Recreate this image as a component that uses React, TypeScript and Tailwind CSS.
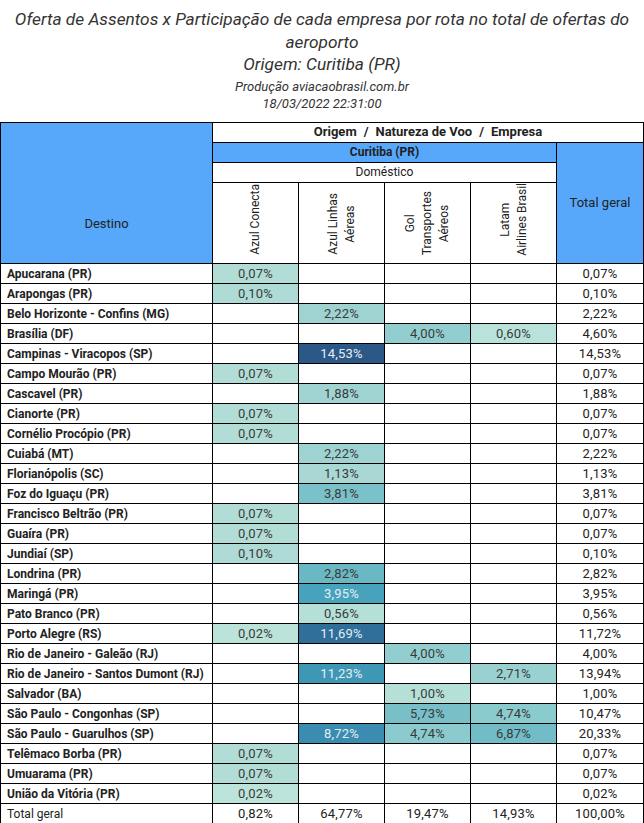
type Cell = { v: string; bg: string; light?: boolean } | null;

const FONT = "font-['Roboto','Liberation_Sans',sans-serif]";

const rows: { name: string; cells: Cell[]; total: string }[] = [
  { name: 'Apucarana (PR)', cells: [{ v: '0,07%', bg: 'bg-[#b2ddd6]' }, null, null, null], total: '0,07%' },
  { name: 'Arapongas (PR)', cells: [{ v: '0,10%', bg: 'bg-[#aedbd5]' }, null, null, null], total: '0,10%' },
  { name: 'Belo Horizonte - Confins (MG)', cells: [null, { v: '2,22%', bg: 'bg-[#9ed3d2]' }, null, null], total: '2,22%' },
  {
    name: 'Brasília (DF)',
    cells: [null, null, { v: '4,00%', bg: 'bg-[#92ced0]' }, { v: '0,60%', bg: 'bg-[#b9e3da]' }],
    total: '4,60%',
  },
  { name: 'Campinas - Viracopos (SP)', cells: [null, { v: '14,53%', bg: 'bg-[#2b5886]', light: true }, null, null], total: '14,53%' },
  { name: 'Campo Mourão (PR)', cells: [{ v: '0,07%', bg: 'bg-[#b2ddd6]' }, null, null, null], total: '0,07%' },
  { name: 'Cascavel (PR)', cells: [null, { v: '1,88%', bg: 'bg-[#a0d4d2]' }, null, null], total: '1,88%' },
  { name: 'Cianorte (PR)', cells: [{ v: '0,07%', bg: 'bg-[#b2ddd6]' }, null, null, null], total: '0,07%' },
  { name: 'Cornélio Procópio (PR)', cells: [{ v: '0,07%', bg: 'bg-[#b2ddd6]' }, null, null, null], total: '0,07%' },
  { name: 'Cuiabá (MT)', cells: [null, { v: '2,22%', bg: 'bg-[#9ed3d2]' }, null, null], total: '2,22%' },
  { name: 'Florianópolis (SC)', cells: [null, { v: '1,13%', bg: 'bg-[#a9d8d4]' }, null, null], total: '1,13%' },
  { name: 'Foz do Iguaçu (PR)', cells: [null, { v: '3,81%', bg: 'bg-[#7bc1c9]' }, null, null], total: '3,81%' },
  { name: 'Francisco Beltrão (PR)', cells: [{ v: '0,07%', bg: 'bg-[#b2ddd6]' }, null, null, null], total: '0,07%' },
  { name: 'Guaíra (PR)', cells: [{ v: '0,07%', bg: 'bg-[#b2ddd6]' }, null, null, null], total: '0,07%' },
  { name: 'Jundiaí (SP)', cells: [{ v: '0,10%', bg: 'bg-[#aedbd5]' }, null, null, null], total: '0,10%' },
  { name: 'Londrina (PR)', cells: [null, { v: '2,82%', bg: 'bg-[#6bb8c5]' }, null, null], total: '2,82%' },
  { name: 'Maringá (PR)', cells: [null, { v: '3,95%', bg: 'bg-[#47a3bc]', light: true }, null, null], total: '3,95%' },
  { name: 'Pato Branco (PR)', cells: [null, { v: '0,56%', bg: 'bg-[#b4e0d8]' }, null, null], total: '0,56%' },
  {
    name: 'Porto Alegre (RS)',
    cells: [{ v: '0,02%', bg: 'bg-[#bbe3da]' }, { v: '11,69%', bg: 'bg-[#2f6f9a]', light: true }, null, null],
    total: '11,72%',
  },
  { name: 'Rio de Janeiro - Galeão (RJ)', cells: [null, null, { v: '4,00%', bg: 'bg-[#92ced0]' }, null], total: '4,00%' },
  {
    name: 'Rio de Janeiro - Santos Dumont (RJ)',
    cells: [null, { v: '11,23%', bg: 'bg-[#3e97b5]', light: true }, null, { v: '2,71%', bg: 'bg-[#99d1d1]' }],
    total: '13,94%',
  },
  { name: 'Salvador (BA)', cells: [null, null, { v: '1,00%', bg: 'bg-[#b5e0d8]' }, null], total: '1,00%' },
  {
    name: 'São Paulo - Congonhas (SP)',
    cells: [null, null, { v: '5,73%', bg: 'bg-[#78bfc8]' }, { v: '4,74%', bg: 'bg-[#8acbce]' }],
    total: '10,47%',
  },
  {
    name: 'São Paulo - Guarulhos (SP)',
    cells: [
      null,
      { v: '8,72%', bg: 'bg-[#3a8cb0]', light: true },
      { v: '4,74%', bg: 'bg-[#8bcbcf]' },
      { v: '6,87%', bg: 'bg-[#72bcc7]' },
    ],
    total: '20,33%',
  },
  { name: 'Telêmaco Borba (PR)', cells: [{ v: '0,07%', bg: 'bg-[#b2ddd6]' }, null, null, null], total: '0,07%' },
  { name: 'Umuarama (PR)', cells: [{ v: '0,07%', bg: 'bg-[#b2ddd6]' }, null, null, null], total: '0,07%' },
  { name: 'União da Vitória (PR)', cells: [{ v: '0,02%', bg: 'bg-[#bde4da]' }, null, null, null], total: '0,02%' },
];

const totals = ['0,82%', '64,77%', '19,47%', '14,93%', '100,00%'];

const companies = [
  ['Azul Conecta'],
  ['Azul Linhas', 'Aéreas'],
  ['Gol', 'Transportes', 'Aéreos'],
  ['Latam', 'Airlines Brasil'],
];

const td = 'border border-black p-0 h-5 leading-[18px]';
const num = 'text-center text-[13px] tracking-[0.2px]';

export default function App() {
  return (
    <div className={`w-[644px] bg-white text-[#333] ${FONT}`}>
      {/* Title */}
      <div className="flex flex-col items-center pt-[8px] pb-[10px] italic text-[#333]">
        <div className="text-[17.3px] leading-[22.5px] text-center px-1">
          Oferta de Assentos x Participação de cada empresa por rota no total de ofertas do aeroporto
        </div>
        <div className="text-[17.3px] leading-[22.5px]">Origem: Curitiba (PR)</div>
        <div className="text-[13px] leading-[17px] mt-[2px]">Produção aviacaobrasil.com.br</div>
        <div className="text-[13px] leading-[17px]">18/03/2022 22:31:00</div>
      </div>

      {/* Table */}
      <table className="table-fixed border-collapse w-[643px] text-[12px] text-[#222]">
        <colgroup>
          <col className="w-[212px]" />
          <col className="w-[86px]" />
          <col className="w-[86px]" />
          <col className="w-[86px]" />
          <col className="w-[86px]" />
          <col className="w-[87px]" />
        </colgroup>
        <thead>
          <tr className="h-5">
            <th rowSpan={4} className="border border-black bg-[#57a8fa] font-normal text-[13px] align-bottom pb-[30px]">
              Destino
            </th>
            <th colSpan={5} className={`${td} font-bold text-[13px]`}>
              Origem<span className="mx-[7px]">/</span>Natureza de Voo<span className="mx-[7px]">/</span>Empresa
            </th>
          </tr>
          <tr className="h-5">
            <th colSpan={4} className={`${td} bg-[#57a8fa] font-bold`}>
              Curitiba (PR)
            </th>
            <th rowSpan={3} className="border border-black bg-[#57a8fa] font-normal text-[13px]">
              Total geral
            </th>
          </tr>
          <tr className="h-5">
            <th colSpan={4} className={`${td} font-normal`}>
              Doméstico
            </th>
          </tr>
          <tr className="h-[80px]">
            {companies.map((lines, i) => (
              <th key={i} className="border border-black p-0 font-normal align-bottom overflow-hidden">
                <div className="inline-block [writing-mode:vertical-rl] rotate-180 text-center leading-[17px] pt-[3px]">
                  {lines.map((l, j) => (
                    <span key={j}>
                      {l}
                      {j < lines.length - 1 && <br />}
                    </span>
                  ))}
                </div>
              </th>
            ))}
          </tr>
        </thead>
        <tbody>
          {rows.map((r) => (
            <tr key={r.name} className="h-5">
              <td className={`${td} pl-[6px] font-bold whitespace-nowrap`}>{r.name}</td>
              {r.cells.map((c, i) =>
                c ? (
                  <td key={i} className={`${td} ${num} ${c.bg} ${c.light ? 'text-[#e4eef5]' : 'text-[#3a3a3a]'}`}>
                    {c.v}
                  </td>
                ) : (
                  <td key={i} className={td} />
                ),
              )}
              <td className={`${td} ${num}`}>{r.total}</td>
            </tr>
          ))}
          <tr className="h-5">
            <td className={`${td} pl-[6px]`}>Total geral</td>
            {totals.map((t, i) => (
              <td key={i} className={`${td} ${num}`}>
                {t}
              </td>
            ))}
          </tr>
        </tbody>
      </table>
    </div>
  );
}
